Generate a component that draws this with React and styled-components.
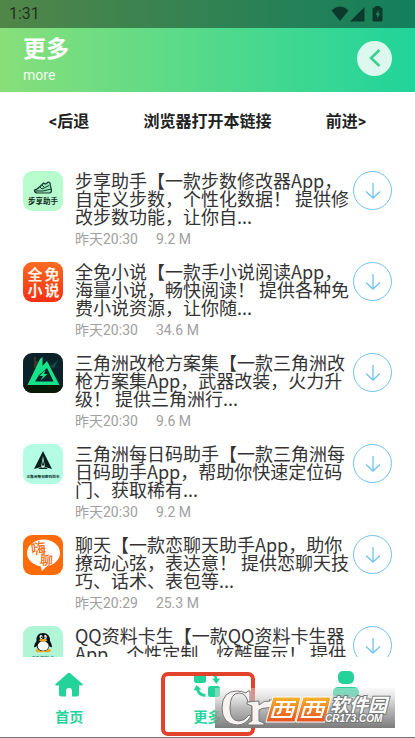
import React, { useState } from 'react';
import styled, { createGlobalStyle } from 'styled-components';

const GlobalStyle = createGlobalStyle`
    * {
        box-sizing: border-box;
    }

    body {
        margin: 0;
        background: #fff;
        font-family: Roboto, 'Noto Sans CJK SC', sans-serif;
        text-spacing-trim: space-all;
    }
`;

const PlainButton = styled.button`
    padding: 0;
    border: 0;
    background: none;
    font-family: inherit;
    cursor: pointer;
`;

// Page shell
const Screen = styled.div`
    display: flex;
    flex-direction: column;
    height: 100vh;
    overflow: hidden;
    border-bottom: 1px solid #777;
`;

const Header = styled.header`
    flex-shrink: 0;
    background: linear-gradient(90deg, #88df7a, #20d49b);
`;

const StatusBar = styled.div`
    display: flex;
    align-items: center;
    justify-content: space-between;
    height: 28px;
    padding: 0 32px 0 9px;
    background: rgba(0, 0, 0, 0.4);
    color: rgba(0, 0, 0, 0.66);
    font-size: 16px;
    line-height: 28px;
`;

const TitleBar = styled.div`
    display: flex;
    align-items: center;
    justify-content: space-between;
    height: 64px;
    padding: 0 23px;
    color: #fff;
`;

const Title = styled.h1`
    margin: 0;
    font-size: 23px;
    font-weight: 700;
    line-height: 30px;
`;

const Subtitle = styled.div`
    font-size: 14px;
    line-height: 20px;
    opacity: 0.9;
`;

const RoundButton = styled(PlainButton)`
    display: flex;
    align-items: center;
    justify-content: center;
    width: 35px;
    height: 35px;
    margin-bottom: 4px;
    border-radius: 50%;
    background: rgba(255, 255, 255, 0.84);
`;

// Back / open / forward links
const LinkRow = styled.div`
    display: flex;
    flex-shrink: 0;
    justify-content: space-between;
    padding: 20px 49px 30px;
`;

const LinkButton = styled(PlainButton)`
    color: #222;
    font-size: 16px;
    font-weight: 700;
    line-height: 20px;
`;

// App list
const List = styled.ul`
    flex: 1;
    min-height: 0;
    margin: 0;
    padding: 9px 23px 0;
    overflow: hidden;
    list-style: none;
`;

const Row = styled.li`
    display: flex;
    align-items: flex-start;
    height: 91px;
`;

const AppIcon = styled.svg`
    flex-shrink: 0;
    width: 40px;
    height: 40px;
    margin-right: 12px;
    border-radius: 9px;
    font-family: 'Noto Sans CJK SC', sans-serif;
`;

const Info = styled.div`
    flex: 1;
    min-width: 0;
`;

const Description = styled.p`
    margin: 0;
    color: #333;
    font-family: 'Noto Sans CJK SC', sans-serif;
    font-size: 18px;
    line-height: 18px;
`;

const Meta = styled.div`
    display: flex;
    gap: 18px;
    margin-top: 4px;
    color: #a0a0a0;
    font-size: 14px;
    line-height: 20px;
`;

const Download = styled(PlainButton)`
    display: flex;
    flex-shrink: 0;
    align-items: center;
    justify-content: center;
    width: 39px;
    height: 39px;
    border: 1px solid #72c3ec;
    border-radius: 50%;
`;

// Bottom tabs
const Tabs = styled.nav`
    position: relative;
    display: grid;
    flex-shrink: 0;
    grid-template-columns: repeat(3, 1fr);
    height: 80px;
    background: #fff;
`;

const Tab = styled(PlainButton)`
    display: flex;
    flex-direction: column;
    align-items: center;
    gap: 8px;
    padding-top: 14px;
    color: #24d39a;
    font-size: 14px;
    font-weight: 700;
    line-height: 20px;
`;

const Highlight = styled.div`
    position: absolute;
    top: 15px;
    left: 50%;
    width: 94px;
    height: 64px;
    border: 4px solid #e2412b;
    border-radius: 7px;
    transform: translateX(-50%);
    pointer-events: none;
`;

const Watermark = styled.svg`
    position: absolute;
    right: 20px;
    bottom: 9px;
    width: 180px;
    height: 40px;
    pointer-events: none;
    font-family: 'Noto Sans CJK SC', sans-serif;
`;

const StatusIcons = () => (
    <svg width="52" height="16" viewBox="0 0 52 16" fill="#0b3a2c" aria-hidden="true">
        <path d="M0.5 4.5Q9 -3.500 17.500 4.500L9 15Z" />
        <path d="M19 15.500L33.500 1V15.500Z" />
        <path d="M44 0h5v1.500h1.500q1 0 1 1V14q0 1.500-1.500 1.500h-7Q41.500 15.500 41.500 14V2.500q0-1 1-1H44Z" />
        <path d="M47.500 4l-3 5h1.700v3.500l3-5h-1.700Z" fill="#20815f" />
    </svg>
);

const StepsIcon = () => (
    <AppIcon viewBox="0 0 40 40">
        <rect width="40" height="40" fill="#b8fdce" />
        <path
            d="M11.500 19Q14 18.500 16.500 16l4-4q1.500 1.500 3 .5l1.500-1.500q1.500 0 2 1l.5 3 1 4q0 3-2 3H15q-4 0-3.500-3Z"
            fill="#94e4ba"
            stroke="#16382c"
            strokeWidth="1.200"
        />
        <path d="M12 20q8 1 16-2M17 16l2 2 7-3.500M19 14l2 2" fill="none" stroke="#16382c" />
        <text x="20" y="33" fontSize="7.500" fontWeight="700" textAnchor="middle" fill="#10291e">步享助手</text>
    </AppIcon>
);

const NovelIcon = () => (
    <AppIcon viewBox="0 0 40 40">
        <defs>
            <linearGradient id="novel" x2="0" y2="1">
                <stop stopColor="#fb6c20" />
                <stop offset="1" stopColor="#f72f16" />
            </linearGradient>
        </defs>
        <rect width="40" height="40" fill="url(#novel)" />
        <g fill="#fff4e8" fontSize="15" fontWeight="700" textAnchor="middle">
            <text x="12" y="18">全</text>
            <text x="29" y="18">免</text>
            <text x="12" y="34">小</text>
            <text x="29" y="34">说</text>
        </g>
    </AppIcon>
);

const DeltaIcon = () => (
    <AppIcon viewBox="0 0 40 40">
        <rect width="40" height="40" fill="#0c222a" />
        <path d="M27 14l8-7-4 8Z" fill="#174f45" />
        <path d="M12 4v11M14 8v8" stroke="#684b25" />
        <rect y="32" width="40" height="8" fill="#061907" />
        <path
            d="M4.500 32L17 6l2.500-2v9L24 8l12.500 24ZM12 28.500h18.500L24 15l-8 7Z"
            fill="#16e287"
            fillRule="evenodd"
        />
        <path d="M22.500 16.500l-6 6.500h3.500l-2.500 4.500 7-6.500h-3.500Z" fill="#16e287" />
    </AppIcon>
);

const DailyIcon = () => (
    <AppIcon viewBox="0 0 40 40">
        <rect width="40" height="40" fill="#b5fce5" />
        <path d="M20 7l9 18-7-2-2-11-2 11-7 2Z" fill="#091d1b" />
        <path d="M20 16l1.500 7 3.500 2H15l3.500-2Z" fill="#091d1b" />
        <path d="M18 23l2-2 2 2-2 1Z" fill="#b5fce5" />
        <text x="20" y="34" fontSize="3.700" fontWeight="700" textAnchor="middle" fill="#10332c">三角洲每日密码助手</text>
    </AppIcon>
);

const ChatIcon = () => (
    <AppIcon viewBox="0 0 40 40">
        <rect width="40" height="40" fill="#ff6b08" />
        <ellipse cx="20.500" cy="18" rx="16.500" ry="13.500" fill="#fff" />
        <path d="M17 29l2 7 6-6Z" fill="#fff" />
        <g fill="#f56e15" fontWeight="500">
            <text x="8" y="19" fontSize="15" transform="rotate(-8 15 14)">嗨</text>
            <text x="17" y="30" fontSize="13" transform="rotate(5 23 25)">聊</text>
        </g>
    </AppIcon>
);

const PenguinIcon = () => (
    <AppIcon viewBox="0 0 40 40">
        <rect width="40" height="40" fill="#b0f6d6" />
        <ellipse cx="16.500" cy="24.500" rx="4" ry="1.800" fill="#f4a51c" />
        <ellipse cx="24" cy="24.500" rx="4" ry="1.800" fill="#f4a51c" />
        <path d="M20 7q7 0 7 8 2 3 2 6-1 1-2.500-1-1 5-6.500 5t-6.500-5Q12 22 11 21q0-3 2.500-6Q13 7 20 7Z" fill="#0a1414" />
        <ellipse cx="20.200" cy="20" rx="5.500" ry="4.700" fill="#fff" />
        <ellipse cx="18" cy="11" rx="1.500" ry="2" fill="#fff" />
        <ellipse cx="22.300" cy="11" rx="1.500" ry="2" fill="#fff" />
        <circle cx="18.400" cy="11.200" r="0.700" />
        <circle cx="21.900" cy="11.200" r="0.700" />
        <ellipse cx="20.200" cy="14.300" rx="4" ry="1.200" fill="#f4a51c" />
        <text x="20" y="34" fontSize="5" fontWeight="700" textAnchor="middle" fill="#467e6a">QQ资料卡</text>
    </AppIcon>
);

const ArrowIcon = () => (
    <svg width="16" height="18" viewBox="0 0 16 18" fill="none" stroke="#72c3ec" strokeWidth="1.300" aria-hidden="true">
        <path d="M8 1v15M1 9.500l7 6.500 7-6.500" />
    </svg>
);

const HomeIcon = () => (
    <svg width="28" height="28" viewBox="0 0 28 28" fill="#24d39a" aria-hidden="true">
        <path d="M12.500 2.500q1.500-1.300 3 0L27.500 13q.7 1.500-1 1.500H24V23q0 2.500-2.500 2.500H17V20q0-3-3-3t-3 3v5.500H6.500Q4 25.500 4 23v-8.500H1.500q-1.700 0-1-1.500Z" />
    </svg>
);

const MoreIcon = () => (
    <svg width="28" height="28" viewBox="0 0 28 28" fill="#24d39a" aria-hidden="true">
        <rect x="1" y="1" width="12" height="11" rx="2.500" />
        <rect x="15" y="15" width="12" height="11" rx="2.500" />
        <path d="M18 3q5.500 1 5 6" fill="none" stroke="#24d39a" strokeWidth="2.500" />
        <path d="M19 7.500h8L23.500 13Z" />
        <path d="M4.500 18q1 6 8 6.500" fill="none" stroke="#24d39a" strokeWidth="3" />
        <path d="M0.500 19.500l3-5.500 5 4.500Z" />
    </svg>
);

const UserIcon = () => (
    <svg width="28" height="28" viewBox="0 0 28 28" fill="#24d39a" aria-hidden="true">
        <rect x="6" y="0" width="16" height="13" rx="5" />
        <path d="M1 21q0-5 6-5h14q6 0 6 5v2q0 3-3 3H4q-3 0-3-3Z" />
    </svg>
);

const SiteMark = () => (
    <Watermark viewBox="0 0 180 40" aria-hidden="true">
        <defs>
            <linearGradient id="shade" x2="0" y2="1">
                <stop stopColor="#eee" stopOpacity="0.4" />
                <stop offset="0.5" stopColor="#aaa" stopOpacity="0.8" />
                <stop offset="1" stopColor="#777" stopOpacity="0.97" />
            </linearGradient>
            <linearGradient id="plate" x2="0" y2="1">
                <stop stopColor="#f7b32b" />
                <stop offset="1" stopColor="#e8501f" />
            </linearGradient>
        </defs>
        <rect width="180" height="40" fill="url(#shade)" />
        <g fill="#f7f3f3" stroke="#777" strokeWidth="1">
            <path d="M35 3v11h-2Q31 5 24 5q-9 0-9 15 0 13 9 13 6 0 10-6l2 1q-5 9-14 9Q7 36 7 20 7 3 22 3q5 0 9 2l2-2Z" />
            <path d="M32 14l12-1v4q5-5 11-4l-1-1q6-1 10 1-5 7-13 7-4 0-7 2v11l5 2v2H33v-2l4-2V18l-5-2Z" />
        </g>
        <g stroke="#fff" strokeWidth="1">
            <path d="M58 9h28l-6 25H51Z" fill="url(#plate)" />
            <path d="M88 9h28l-6 25H81Z" fill="url(#plate)" />
        </g>
        <g fill="none" stroke="#fff" strokeWidth="2.200">
            <path d="M61 14h20M60 19h19l-3 10H57ZM67 14l-2 10-3 2M74 14l-2 10h4" />
            <path d="M91 14h20M90 19h19l-3 10H87ZM97 14l-2 10-3 2M104 14l-2 10h4" />
        </g>
        <g fill="#fff" stroke="#777" strokeWidth="2" paintOrder="stroke" fontWeight="700" fontStyle="italic">
            <text x="115" y="24" fontSize="19">软件园</text>
            <text x="110" y="34" fontSize="10" fontFamily="'Liberation Sans', sans-serif">CR173.COM</text>
        </g>
    </Watermark>
);

const apps = [
    { Icon: StepsIcon, text: '步享助手【一款步数修改器App，自定义步数，个性化数据！ 提供修改步数功能，让你自...', time: '昨天20:30', size: '9.2 M' },
    { Icon: NovelIcon, text: '全免小说【一款手小说阅读App，海量小说，畅快阅读！ 提供各种免费小说资源，让你随...', time: '昨天20:30', size: '34.6 M' },
    { Icon: DeltaIcon, text: '三角洲改枪方案集【一款三角洲改枪方案集App，武器改装，火力升级！ 提供三角洲行...', time: '昨天20:30', size: '9.6 M' },
    { Icon: DailyIcon, text: '三角洲每日码助手【一款三角洲每日码助手App，帮助你快速定位码门、获取稀有...', time: '昨天20:30', size: '9.2 M' },
    { Icon: ChatIcon, text: '聊天【一款恋聊天助手App，助你撩动心弦，表达意！ 提供恋聊天技巧、话术、表包等...', time: '昨天20:29', size: '25.3 M' },
    { Icon: PenguinIcon, text: 'QQ资料卡生【一款QQ资料卡生器App，个性定制，炫酷展示！ 提供' },
];

const tabs = [
    { label: '首页', Icon: HomeIcon },
    { label: '更多', Icon: MoreIcon },
    { label: '我的', Icon: UserIcon },
];

const App = () => {
    const [active, setActive] = useState(1);

    return (
        <Screen>
            <GlobalStyle />
            <Header>
                <StatusBar>
                    <span>1:31</span>
                    <StatusIcons />
                </StatusBar>
                <TitleBar>
                    <div>
                        <Title>更多</Title>
                        <Subtitle>more</Subtitle>
                    </div>
                    <RoundButton aria-label="返回">
                        <svg width="12" height="18" viewBox="0 0 12 18" fill="none" stroke="#37d18f" strokeWidth="2.500">
                            <path d="M10.500 1L2 9l8.500 8" />
                        </svg>
                    </RoundButton>
                </TitleBar>
            </Header>
            <LinkRow>
                <LinkButton>&lt;后退</LinkButton>
                <LinkButton>浏览器打开本链接</LinkButton>
                <LinkButton>前进&gt;</LinkButton>
            </LinkRow>
            <List>
                {apps.map(({ Icon, text, time, size }) => (
                    <Row key={text}>
                        <Icon />
                        <Info>
                            <Description>{text}</Description>
                            {time && (
                                <Meta>
                                    <span>{time}</span>
                                    <span>{size}</span>
                                </Meta>
                            )}
                        </Info>
                        <Download aria-label="下载">
                            <ArrowIcon />
                        </Download>
                    </Row>
                ))}
            </List>
            <Tabs>
                {tabs.map(({ label, Icon }, i) => (
                    <Tab key={label} aria-pressed={active === i} onClick={() => setActive(i)}>
                        <Icon />
                        {label}
                    </Tab>
                ))}
                <Highlight />
                <SiteMark />
            </Tabs>
        </Screen>
    );
};

export default App;
